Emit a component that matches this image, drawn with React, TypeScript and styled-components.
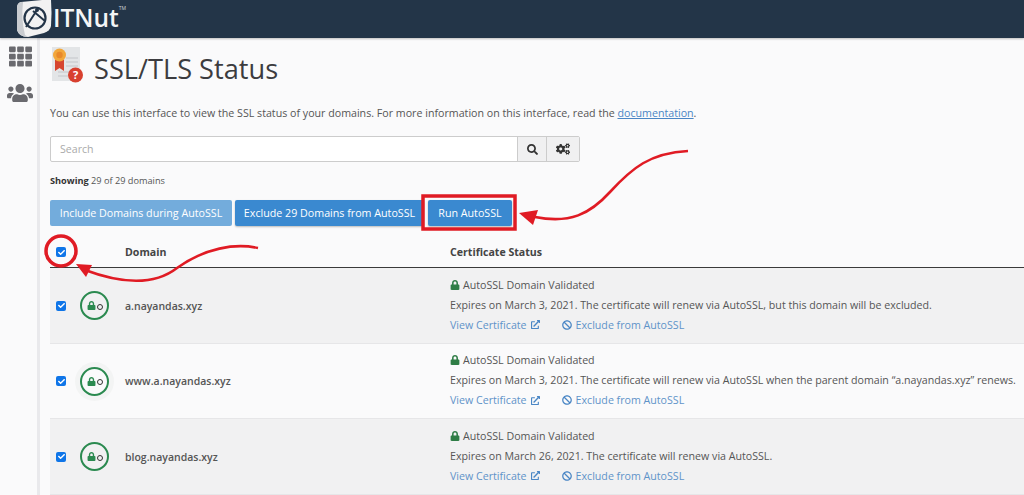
import React from 'react';
import styled, { createGlobalStyle } from 'styled-components';
import { FaLock, FaSearch, FaCogs, FaExternalLinkAlt, FaBan, FaUsers, FaTh, FaCheck } from 'react-icons/fa';

const Global = createGlobalStyle`
  html, body { margin:0; padding:0; width:1024px; height:495px; overflow:hidden; background:#fafafb; }
  body { font-family:"Open Sans","Liberation Sans",sans-serif; color:#555; }
  * { box-sizing:border-box; }
`;

const Page = styled.div`position:relative;width:1024px;height:495px;overflow:hidden;`;
const Header = styled.header`
  height:38px;background:#233548;display:flex;align-items:center;padding-left:16px;
  box-shadow:0 1px 2px rgba(0,0,0,.25);position:relative;
`;
const LogoMark = styled.svg`width:36px;height:38px;flex:none;`;
const LogoText = styled.span`
  color:#f4f5f6;font-size:24.5px;font-weight:600;line-height:36px;margin:-2px 0 0 1px;
`;
const Tm = styled.sup`color:#cfd5db;font-size:5px;align-self:flex-start;margin:5px 0 0 0;`;
const Body = styled.div`display:flex;height:457px;`;
const Sidebar = styled.nav`
  width:40px;flex:none;background:#fafafb;border-right:3px solid #e9e9ec;padding:7px 0 0 3px;
  display:flex;flex-direction:column;align-items:center;gap:12px;color:#6a6a6f;
`;
const Main = styled.main`flex:1;padding:8px 0 0 10px;min-width:0;`;
const TitleRow = styled.div`display:flex;align-items:center;height:40px;gap:9px;margin-left:2px;`;
const CertIcon = styled.svg`width:33px;height:38px;flex:none;`;
const Title = styled.h1`margin:6px 0 0;font-size:27.2px;font-weight:400;color:#3c3c3f;line-height:40px;`;
const Intro = styled.p`margin:19px 0 0;font-size:10.66px;line-height:16px;color:#555;white-space:nowrap;`;
const DocLink = styled.a`color:#4a86c5;text-decoration:underline;`;
const SearchBar = styled.div`
  display:flex;width:530px;height:26px;margin-top:15px;border:1px solid #ccc;border-radius:2px;background:#fff;
`;
const SearchInput = styled.div`flex:1;padding-left:9px;font-size:10.6px;line-height:24px;color:#aaa;`;
const AddonBtn = styled.div`
  width:${p => p.$w}px;background:#f0f0f1;border-left:1px solid #ccc;display:flex;align-items:center;justify-content:center;color:#333;
`;
const Showing = styled.div`margin-top:12px;font-size:9.2px;line-height:14px;color:#555;b{color:#333;font-weight:700;}`;
const Buttons = styled.div`display:flex;gap:3px;margin-top:12px;height:26px;`;
const Btn = styled.button`
  font-family:inherit;font-size:10.7px;color:#fff;border:none;border-radius:2px;padding:0;width:${p => p.$w}px;
  height:26px;background:${p => p.$off ? '#73acdc' : '#3a89d0'};box-shadow:${p => p.$off ? 'none' : '0 1px 2px rgba(0,0,0,.25)'};
`;
const RunBtn = styled(Btn)`margin-left:1px;`;
const Cols = styled.div`display:grid;grid-template-columns:75px 325px 1fr;`;
const TableHead = styled(Cols)`
  height:42px;align-items:center;padding-top:11px;border-bottom:1.5px solid #3a3a3a;font-size:10.6px;font-weight:700;color:#444;
`;
const RowBox = styled(Cols)`
  height:${p => p.$h}px;background:${p => p.$odd ? '#f1f1f2' : '#fafafb'};border-bottom:1px solid #e6e6e8;align-items:center;
`;
const LeadCell = styled.div`padding-left:6px;display:flex;align-items:center;gap:14px;`;
const Check = styled.span`
  width:10px;height:10px;border-radius:2px;background:#0f75e8;color:#fff;display:flex;align-items:center;justify-content:center;
`;
const Ring = styled.span`
  width:29px;height:29px;flex:none;border:2px solid #2b8a50;border-radius:50%;
  display:flex;align-items:center;justify-content:center;gap:1px;color:#2b8a50;
  box-shadow:0 0 0 ${p => p.$halo ? 5 : 0}px #f3f4f4;
`;
const Dot = styled.span`width:6px;height:6px;border:1.5px solid #333;border-radius:50%;margin-top:2px;`;
const DomainName = styled.span`font-size:10.5px;font-weight:600;color:#555;`;
const Lines = styled.div`font-size:10.65px;line-height:20px;color:#555;white-space:nowrap;margin-top:-2px;`;
const Badge = styled.div`display:flex;align-items:center;gap:3px;color:#555;svg{color:#2f7d46;}`;
const Links = styled.div`display:flex;color:#5f93c9;height:20px;align-items:center;`;
const LinkItem = styled.span`display:inline-flex;align-items:center;gap:4px;margin-right:${p => p.$mr || 0}px;svg{color:#4a86c5;}`;
const Overlay = styled.svg`position:absolute;left:0;top:0;pointer-events:none;`;

type RowData = { domain: string; expires: string; h: number; odd: boolean; halo?: boolean };
const rows: RowData[] = [
  { domain: 'a.nayandas.xyz', expires: 'Expires on March 3, 2021. The certificate will renew via AutoSSL, but this domain will be excluded.', h: 76, odd: true },
  { domain: 'www.a.nayandas.xyz', expires: 'Expires on March 3, 2021. The certificate will renew via AutoSSL when the parent domain “a.nayandas.xyz” renews.', h: 75, odd: false, halo: true },
  { domain: 'blog.nayandas.xyz', expires: 'Expires on March 26, 2021. The certificate will renew via AutoSSL.', h: 76, odd: true },
];

function TickBox() {
  return <Check><FaCheck size={7} /></Check>;
}

export default function App() {
  return (
    <Page>
      <Global />
      <Header>
        <LogoMark viewBox="0 0 36 38">
          <path d="M5 2 L26 0 L35 0 Q36 12 35 26 Q34 31 28 33 L12 37 Q3 37 1 30 L1 8 Q1 3 5 2Z" fill="#f2f2f2" />
          <path d="M1 8 Q1 3 5 2 L7 2 Q5 20 9 35 L12 37 Q3 37 1 30Z" fill="#c9ccd0" />
          <circle cx="19" cy="18" r="10.5" fill="none" stroke="#233548" strokeWidth="2.2" />
          <path d="M10 27 L21 10 M17 11 L29 21" stroke="#233548" strokeWidth="2" fill="none" />
          <circle cx="21" cy="10" r="2" fill="#233548" />
        </LogoMark>
        <LogoText>ITNut</LogoText>
        <Tm>TM</Tm>
      </Header>
      <Body>
        <Sidebar>
          <FaTh size={23} />
          <FaUsers size={26} />
        </Sidebar>
        <Main>
          <TitleRow>
            <CertIcon viewBox="0 0 33 38">
              <rect x="0" y="0" width="28" height="34" fill="#e3e5e7" />
              <path d="M14 11h12M14 15h12M14 19h12M6 25h12M6 29h10" stroke="#c3c6c9" strokeWidth="1.2" />
              <path d="M3 13v11l4.5-3 4.5 3V13z" fill="#d6452f" />
              <circle cx="7.5" cy="8" r="6.5" fill="#f2a73b" />
              <circle cx="7.5" cy="8" r="3.2" fill="#e8892b" />
              <circle cx="23.5" cy="28" r="7.5" fill="#d8402f" />
              <text x="23.5" y="32" textAnchor="middle" fontSize="11" fontWeight="700" fill="#fff" fontFamily="Open Sans">?</text>
            </CertIcon>
            <Title>SSL/TLS Status</Title>
          </TitleRow>
          <Intro>
            You can use this interface to view the SSL status of your domains. For more information on this interface, read the <DocLink>documentation</DocLink>.
          </Intro>
          <SearchBar>
            <SearchInput>Search</SearchInput>
            <AddonBtn $w={29}><FaSearch size={11} /></AddonBtn>
            <AddonBtn $w={33}><FaCogs size={14} /></AddonBtn>
          </SearchBar>
          <Showing><b>Showing</b> 29 of 29 domains</Showing>
          <Buttons>
            <Btn $off $w={182}>Include Domains during AutoSSL</Btn>
            <Btn $w={189}>Exclude 29 Domains from AutoSSL</Btn>
            <RunBtn $w={84}>Run AutoSSL</RunBtn>
          </Buttons>
          <TableHead>
            <LeadCell><TickBox /></LeadCell>
            <span>Domain</span>
            <span>Certificate Status</span>
          </TableHead>
          {rows.map(r => (
            <RowBox key={r.domain} $h={r.h} $odd={r.odd}>
              <LeadCell>
                <TickBox />
                <Ring $halo={r.halo}>
                  <FaLock size={9} />
                  <Dot />
                </Ring>
              </LeadCell>
              <DomainName>{r.domain}</DomainName>
              <Lines>
                <Badge><FaLock size={10} />AutoSSL Domain Validated</Badge>
                <div>{r.expires}</div>
                <Links>
                  <LinkItem $mr={22}>View Certificate <FaExternalLinkAlt size={9} /></LinkItem>
                  <LinkItem><FaBan size={10} />Exclude from AutoSSL</LinkItem>
                </Links>
              </Lines>
            </RowBox>
          ))}
        </Main>
      </Body>
      <Overlay width="1024" height="495" viewBox="0 0 1024 495">
        <rect x="423" y="196" width="92" height="33" fill="none" stroke="#e01b24" strokeWidth="3.5" />
        <path d="M688 151 C650 153 632 168 610 192 C590 214 570 224 535 217" fill="none" stroke="#e01b24" strokeWidth="2.6" />
        <path d="M519 213 L538 210 L533 225Z" fill="#e01b24" />
        <circle cx="61" cy="251" r="15" fill="none" stroke="#e01b24" strokeWidth="3.5" />
        <path d="M258 248 C235 243 205 248 177 268 C155 285 125 285 85 270" fill="none" stroke="#e01b24" strokeWidth="2.6" />
        <path d="M76 264 L92 265 L86 277Z" fill="#e01b24" />
      </Overlay>
    </Page>
  );
}
